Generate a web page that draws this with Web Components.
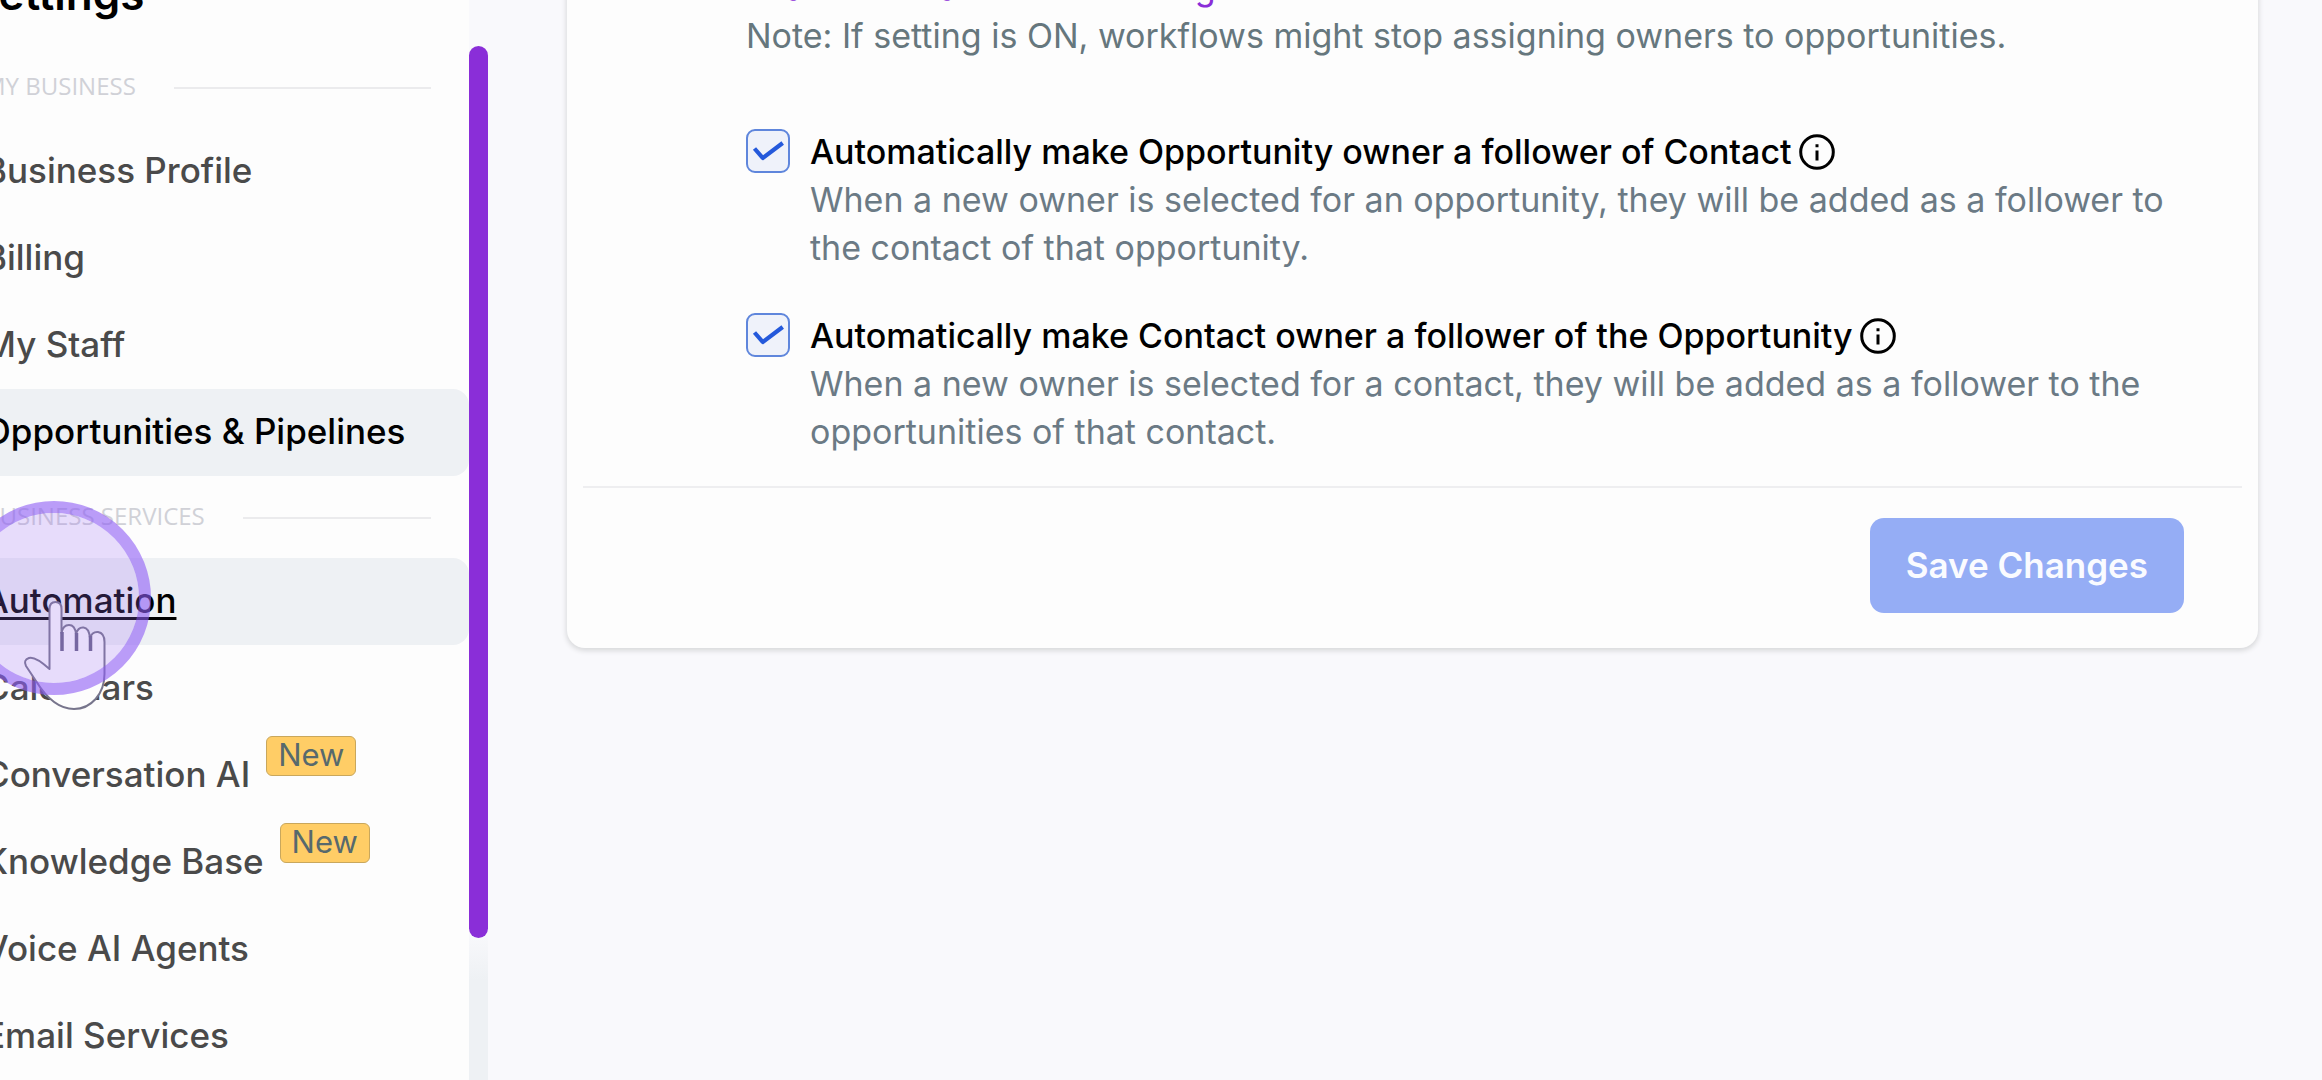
<!DOCTYPE html>
<html lang="en">
<head>
<meta charset="utf-8">
<title>Settings</title>
<style>
html{height:100%}
body{margin:0;height:100%;overflow:hidden;background:#f9f9fc;font-family:Inter,"Liberation Sans",sans-serif;color:#000}
</style>
</head>
<body>
<settings-app></settings-app>
<script>
const define = (name, html) => customElements.define(name, class extends HTMLElement {
  constructor() {
    super();
    const t = document.createElement('template');
    t.innerHTML = html;
    this.attachShadow({ mode: 'open' }).append(t.content.cloneNode(true));
  }
});

define('nav-section', `
<style>
:host{display:flex;align-items:center;gap:38px;height:36px;padding:0 38px 0 24px;font:500 24px/36px "Open Sans",Inter,sans-serif;color:#d0d1d7;white-space:nowrap}
h2{margin:0;font:inherit}
i{flex:1;height:2px;margin-top:4px;background:#ebebed}
</style><h2><slot></slot></h2><i></i>`);

define('new-badge', `
<style>
:host{display:block;box-sizing:border-box;height:40px;padding:0 11px;border:1px solid #c9a75c;border-radius:6px;background:#ffcd66;color:#57696d;font:400 31px/36px Inter,sans-serif}
</style><slot></slot>`);

define('nav-item', `
<style>
:host{display:block;height:87px}
a{display:flex;height:87px;box-sizing:border-box;padding-left:24px;gap:16px;border-radius:0 16px 16px 0;color:#4a4a4a;text-decoration:none;font-weight:500;font-size:35px;line-height:84px;white-space:nowrap}
:host([active]) a,:host([hover]) a{background:#eef1f4;color:#000}
:host([hover]) a{text-decoration:underline;text-decoration-thickness:3px;text-underline-offset:4px}
::slotted(new-badge){margin-top:4px}
</style><a href="#"><slot></slot><slot name="badge"></slot></a>`);

define('side-nav', `
<style>
:host{display:flex;flex:none;width:528px;margin-left:-40px;background:#fdfdfd}
nav{flex:1;min-width:0;display:flex;flex-direction:column}
h1{margin:-38px 0 0 10px;height:106px;font-weight:600;font-size:44px;line-height:64px}
.group{margin-top:22px}
.list{padding-top:24px}
.rail{flex:none;width:19px;background:linear-gradient(#f9f9fc 0 930px,#eef1f4 980px)}
.thumb{height:892px;margin-top:46px;border-radius:10px;background:#8a2ed8}
</style>
<nav aria-label="Settings">
<h1>Settings</h1>
<nav-section>MY BUSINESS</nav-section>
<div class="list">
<nav-item>Business Profile</nav-item><nav-item>Billing</nav-item><nav-item>My Staff</nav-item><nav-item active>Opportunities &amp; Pipelines</nav-item>
</div>
<nav-section class="group">BUSINESS SERVICES</nav-section>
<div class="list">
<nav-item hover>Automation</nav-item><nav-item>Calendars</nav-item>
<nav-item>Conversation AI<new-badge slot="badge">New</new-badge></nav-item>
<nav-item>Knowledge Base<new-badge slot="badge">New</new-badge></nav-item>
<nav-item>Voice AI Agents</nav-item><nav-item>Email Services</nav-item>
</div>
</nav>
<div class="rail"><div class="thumb"></div></div>`);

define('info-icon', `
<style>:host{display:inline-flex;flex:none}svg{width:38px;height:38px}</style>
<svg viewBox="0 0 38 38" fill="none" stroke="#000" stroke-width="3" aria-hidden="true"><circle cx="19" cy="19" r="16.3"/><path d="M19 17.500v10M19 11.300v3"/></svg>`);

define('check-option', `
<style>
:host{display:grid;grid-template-columns:44px 1fr;column-gap:20px}
input,svg{grid-area:1/1;width:44px;height:44px;margin:1px 0 0}
input{appearance:none;box-sizing:border-box;border:2px solid #5f86dc;border-radius:9px;background:#eff2fa}
svg{pointer-events:none;z-index:1}
.title{display:flex;align-items:center;gap:6px;font-weight:500;font-size:34px;line-height:48px}
p{grid-column:2;margin:0;font-size:34px;line-height:48px;color:#6b7a85}
</style>
<input type="checkbox" id="c" checked><svg viewBox="0 0 44 44" fill="none" stroke="#2459db" stroke-width="4.2" stroke-linejoin="round"><path d="M8.500 19.500l8.200 9.500 20-15"/></svg>
<div class="title"><label for="c"><slot name="title"></slot></label><info-icon></info-icon></div>
<p><slot></slot></p>`);

define('save-button', `
<style>
:host{display:block}
button{height:95px;padding:0 36px;border:0;border-radius:14px;background:#95adf5;color:#fafbff;font:600 35px/95px Inter,sans-serif;display:block}
</style><button type="button"><slot></slot></button>`);

define('settings-card', `
<style>
:host{display:block;flex:1;min-width:0;margin:-36px 64px 0 79px;align-self:flex-start;background:#fdfdfd;border-radius:0 0 18px 18px;box-shadow:0 2px 5px 1px #d9dadc}
.body{display:flex;flex-direction:column;padding:0 64px 30px 179px}
.note{font-size:34px;line-height:48px;color:#66777d}
.note a{color:#8a2ed8;text-decoration:none}
.note p{margin:0}
.options{display:flex;flex-direction:column;gap:40px;margin-top:68px}
footer{display:flex;justify-content:flex-end;margin:0 16px;padding:30px 58px 35px 0;border-top:2px solid #eeeef0}
</style>
<div class="body">
<div class="note"><a href="#">Learn more about this setting.</a><p>Note: If setting is ON, workflows might stop assigning owners to opportunities.</p></div>
<div class="options">
<check-option><span slot="title">Automatically make Opportunity owner a follower of Contact</span>When a new owner is selected for an opportunity, they will be added as a follower to the contact of that opportunity.</check-option>
<check-option><span slot="title">Automatically make Contact owner a follower of the Opportunity</span>When a new owner is selected for a contact, they will be added as a follower to the opportunities of that contact.</check-option>
</div></div>
<footer><save-button>Save Changes</save-button></footer>`);

define('click-pointer', `
<style>
:host{position:absolute;left:-43px;top:501px;width:194px;height:230px;pointer-events:none}
svg{display:block;width:194px;height:230px}
</style>
<svg viewBox="-43 501 194 230" aria-hidden="true">
<path d="M49.500 669V609Q49.500 602 55.500 602T61.500 609V633Q63 625 69 625T76 634Q78 627 83.500 627.500T90 638Q92 631.500 98 632 104.500 633 104.500 642V674C104.500 694 91 709 74 709 56 709 44 694 36 681L26 666Q23 660 29 658 35 656 49.500 669Z" fill="#fdfdfd" stroke="#77758c" stroke-width="2" stroke-linejoin="round"/>
<path d="M62 632v19M76.500 633v18M90.500 636v15" stroke="#6a6588" stroke-width="3.500"/>
<circle cx="54" cy="598" r="85" fill="#9f70f5" fill-opacity=".23"/>
<circle cx="54" cy="598" r="91" fill="none" stroke="#8e5bf5" stroke-opacity=".6" stroke-width="12"/>
</svg>`);

define('settings-app', `
<style>:host{display:flex;position:relative;height:100%;overflow:hidden}</style>
<side-nav></side-nav><settings-card></settings-card><click-pointer></click-pointer>`);
</script>
</body>
</html>
